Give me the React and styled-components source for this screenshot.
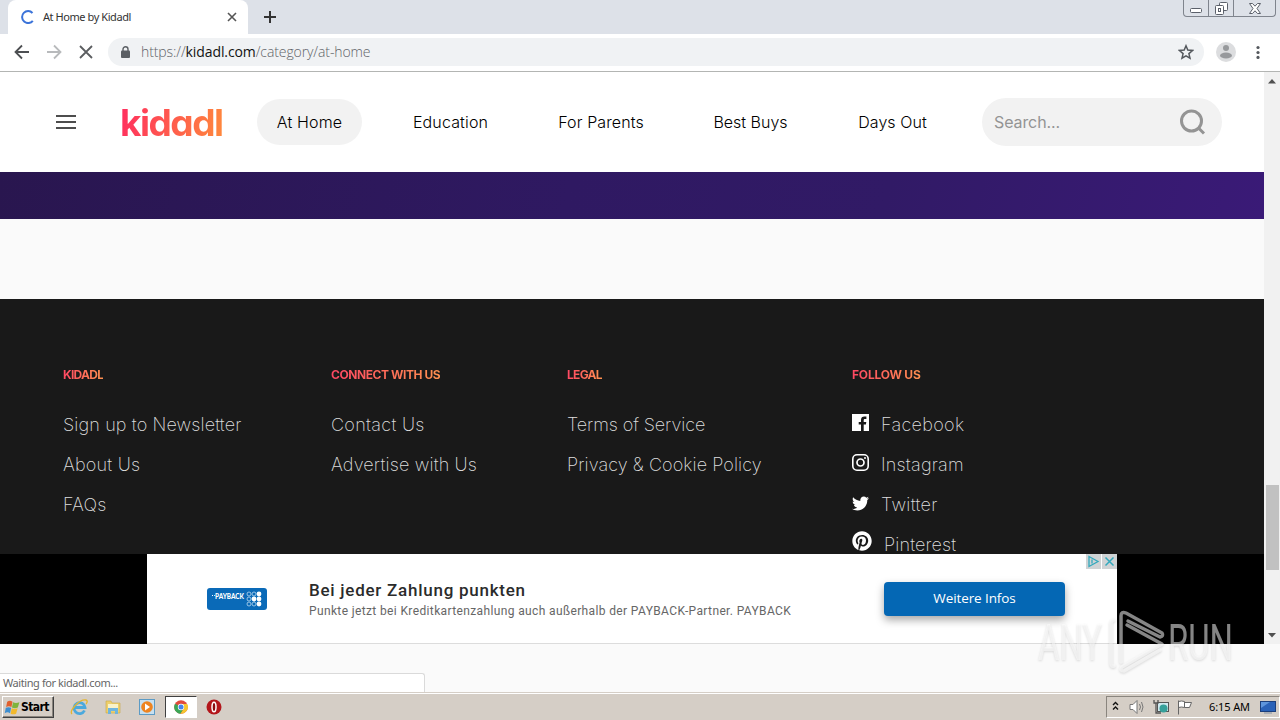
import React from "react";
import styled, { createGlobalStyle, css } from "styled-components";
import { FaTwitter, FaPinterest } from "react-icons/fa";

const GlobalStyle = createGlobalStyle`
  * {
    box-sizing: border-box;
  }
  body {
    margin: 0;
    overflow: hidden;
    font-family: "Inter", "Liberation Sans", sans-serif;
  }
  svg {
    display: block;
    flex: none;
  }
`;

const Screen = styled.div`
  position: relative;
  display: flex;
  flex-direction: column;
  width: 1280px;
  height: 720px;
  overflow: hidden;
  background: #fafafa;
`;

// text with adjustable tracking
const Label = styled.span`
  white-space: pre;
  letter-spacing: ${({ $track = 0 }) => $track}px;
`;

/* ---------- browser ---------- */

const TabStrip = styled.div`
  display: flex;
  height: 34px;
  flex: none;
  padding-left: 8px;
  background: #dde1e8;
`;

const Tab = styled.div`
  display: flex;
  align-items: center;
  width: 240px;
  height: 34px;
  padding: 0 11px 0 13px;
  background: #fff;
  border-radius: 8px 8px 0 0;
  font: 11px "Noto Sans", sans-serif;
  color: #333;
`;

const TabTitle = styled(Label)`
  flex: 1;
  margin: -2px 0 0 8px;
`;

const NewTab = styled.div`
  display: flex;
  align-items: center;
  margin-left: 16px;
`;

const WindowButtons = styled.div`
  display: flex;
  height: 17px;
  margin-left: auto;
  margin-right: 4px;
  border: 1px solid #7f848d;
  border-top: 0;
  border-radius: 0 0 4px 4px;
`;

const WindowButton = styled.div`
  display: flex;
  align-items: center;
  justify-content: center;
  width: ${({ $width }) => $width}px;
  & + & {
    border-left: 1px solid #7f848d;
  }
`;

const Toolbar = styled.div`
  display: flex;
  align-items: center;
  height: 38px;
  flex: none;
  padding: 0 14px 2px 14px;
  background: #fff;
  border-bottom: 1px solid #b3b5b3;
`;

const ToolIcons = styled.div`
  display: flex;
  gap: 16px;
`;

const AddressBar = styled.div`
  display: flex;
  align-items: center;
  width: 1096px;
  height: 28px;
  margin-left: 14px;
  padding: 0 10px 0 12px;
  background: #f0f2f4;
  border-radius: 14px;
`;

const Url = styled(Label)`
  flex: 1;
  margin-left: 10px;
  font: 300 14px "Open Sans", sans-serif;
  color: #5f6368;
  b {
    font-weight: 400;
    color: #111;
  }
`;

const Avatar = styled.div`
  margin: 0 15px 0 12px;
`;

/* ---------- page ---------- */

const Viewport = styled.div`
  display: flex;
  height: 572px;
  flex: none;
`;

const Page = styled.div`
  display: flex;
  flex-direction: column;
  width: 1264px;
  height: 572px;
  overflow: hidden;
  background: #fafafa;
`;

const Header = styled.header`
  display: flex;
  align-items: center;
  height: 100px;
  flex: none;
  padding-left: 56px;
  background: #fff;
`;

const Logo = styled.div`
  width: 180px;
  padding: 2px 0 0 43px;
  font-size: 37px;
  line-height: 44px;
  span {
    display: inline-block;
    font-weight: 700;
    font-feature-settings: "cv11";
    color: transparent;
    background: linear-gradient(100deg, #ff2d5f, #ff8a3c);
    background-clip: text;
    -webkit-background-clip: text;
  }
`;

const Nav = styled.nav`
  display: flex;
  gap: 30.5px;
`;

const NavItem = styled.a`
  display: flex;
  justify-content: center;
  align-items: center;
  width: ${({ $width }) => $width}px;
  height: 46px;
  border-radius: 23px;
  font-size: 16px;
  font-weight: 300;
  color: #000;
  ${({ $active }) =>
    $active &&
    css`
      background: #f2f2f2;
    `}
`;

const Search = styled.div`
  display: flex;
  align-items: center;
  justify-content: space-between;
  width: 240px;
  height: 48px;
  margin-left: 35px;
  padding: 0 16px 0 12px;
  border-radius: 24px;
  background: #f2f2f2;
  font-size: 16px;
  color: #949494;
`;

const Banner = styled.div`
  height: 47px;
  flex: none;
  background: linear-gradient(105deg, #29164f, #2f1962 45%, #311a66 70%, #3a1a77);
`;

const Footer = styled.footer`
  display: grid;
  grid-template-columns: 268px 236px 285px 1fr;
  height: 255px;
  flex: none;
  margin-top: 80px;
  padding: 67px 0 0 63px;
  overflow: hidden;
  background: #191919;
`;

const FooterHeading = styled.h4`
  width: max-content;
  height: 18px;
  margin: 0 0 20px;
  font-size: 12px;
  line-height: 18px;
  font-weight: 700;
  color: transparent;
  background: linear-gradient(90deg, #ff4763, #ff9150);
  background-clip: text;
  -webkit-background-clip: text;
`;

const FooterLink = styled.a`
  display: flex;
  align-items: center;
  height: 40px;
  font-size: 18px;
  font-weight: 200;
  color: #dedede;
`;

const SocialIcon = styled.span`
  margin: 0 12px ${({ $lift = 4 }) => $lift}px 0;
  color: #fff;
`;

const AdRow = styled.div`
  display: flex;
  justify-content: center;
  height: 90px;
  flex: none;
  background: #000;
`;

const Ad = styled.div`
  position: relative;
  display: flex;
  align-items: center;
  width: 970px;
  padding-left: 60px;
  background: #fff;
  border-bottom: 1px solid #dcdcdc;
`;

const AdCopy = styled.div`
  display: flex;
  flex-direction: column;
  width: 575px;
  margin-left: 42px;
  padding-top: 2px;
`;

const AdTitle = styled(Label)`
  font: 500 17px/22px "Roboto", sans-serif;
  color: #2b2b2b;
`;

const AdText = styled(Label)`
  font: 12px/20px "Roboto", sans-serif;
  color: #666;
`;

const AdButton = styled.div`
  display: flex;
  align-items: center;
  justify-content: center;
  width: 181px;
  height: 34px;
  padding-bottom: 2px;
  border-radius: 4px;
  background: #0467b4;
  box-shadow: 0 4px 9px rgba(0, 0, 0, 0.35);
  font: 13.5px "Open Sans", sans-serif;
  color: #fff;
`;

const AdChoices = styled.div`
  position: absolute;
  top: 0;
  right: 0;
  display: flex;
  gap: 1px;
`;

const Scrollbar = styled.div`
  display: flex;
  flex-direction: column;
  align-items: center;
  width: 16px;
  padding: 7px 0 6px;
  background: #f1f1f1;
`;

const Thumb = styled.div`
  width: 13px;
  height: 85px;
  margin-top: 401px;
  margin-bottom: auto;
  background: #c1c1c1;
`;

const StatusArea = styled.div`
  display: flex;
  align-items: flex-end;
  height: 48px;
  flex: none;
`;

const Status = styled.div`
  width: 425px;
  height: 19px;
  padding-left: 3px;
  border: 1px solid #dadada;
  border-left: 0;
  border-bottom: 0;
  border-radius: 0 3px 0 0;
  background: #fff;
  font: 11px/18px "Noto Sans", sans-serif;
  color: #666;
`;

/* ---------- taskbar ---------- */

const Taskbar = styled.div`
  display: flex;
  align-items: center;
  height: 28px;
  flex: none;
  padding: 1px 0 0 2px;
  border-top: 1px solid #d5cec6;
  box-shadow: inset 0 1px #fff;
  background: #d5cec6;
`;

const StartButton = styled.div`
  display: flex;
  align-items: center;
  width: 52px;
  height: 22px;
  padding-left: 1px;
  border: 1px solid;
  border-color: #fff #404040 #404040 #fff;
  box-shadow: inset -1px -1px #8a857e;
  font: bold 12px "DejaVu Sans Condensed", "DejaVu Sans", sans-serif;
  color: #000;
`;

const TaskIcon = styled.div`
  display: flex;
  align-items: center;
  justify-content: center;
  width: 32px;
  height: 22px;
  margin-left: ${({ $gap = 2 }) => $gap}px;
  ${({ $active }) =>
    $active &&
    css`
      background: #fff;
      border: 1px solid;
      border-color: #404040 #fff #fff #404040;
    `}
`;

const Tray = styled.div`
  display: flex;
  align-items: center;
  width: 174px;
  height: 22px;
  margin-left: auto;
  padding-left: 5px;
  border: 1px solid;
  border-color: #8a857e #fff #fff #8a857e;
  font: 11px "Noto Sans", sans-serif;
  color: #000;
`;

const TrayIcons = styled.div`
  display: flex;
  align-items: center;
  gap: 7px;
  svg:first-child {
    margin: -2px 3px 0 0;
  }
`;

const Clock = styled(Label)`
  width: 41px;
  margin: -1px 10px 0 16px;
`;

const Watermark = styled.svg`
  position: absolute;
  left: 1030px;
  top: 604px;
  filter: drop-shadow(0 1px 1px rgba(0, 0, 0, 0.25));
`;

const NAV = [
  { text: "At Home", width: 105, track: 0.15, active: true },
  { text: "Education", width: 116, track: 0.15 },
  { text: "For Parents", width: 124, track: 0.12 },
  { text: "Best Buys", width: 114, track: 0 },
  { text: "Days Out", width: 109, track: 0.05 },
];

const FOOTER = [
  {
    title: "KIDADL",
    track: -0.7,
    links: [
      { text: "Sign up to Newsletter", track: 0.13 },
      { text: "About Us", track: 0.2 },
      { text: "FAQs", track: 0.1 },
    ],
  },
  {
    title: "CONNECT WITH US",
    track: -0.43,
    links: [
      { text: "Contact Us", track: 0.3 },
      { text: "Advertise with Us", track: 0.16 },
    ],
  },
  {
    title: "LEGAL",
    track: -0.7,
    links: [
      { text: "Terms of Service", track: -0.1 },
      { text: "Privacy & Cookie Policy", track: 0.08 },
    ],
  },
];

const FacebookIcon = () => (
  <svg width="17" height="17" viewBox="0 0 17 17">
    <path
      fill="#fff"
      fillRule="evenodd"
      d="M0 0h17v17h-5.3v-6.5h2.2l.4-2.6h-2.6V6.3c0-.8.4-1.3 1.4-1.3h1.3V2.6l-2-.1c-2.1 0-3.4 1.2-3.4 3.4v2H6.7v2.6H9V17H0z"
    />
  </svg>
);

const InstagramIcon = () => (
  <svg width="17" height="17" viewBox="0 0 17 17" fill="none" stroke="#fff">
    <rect x=".8" y=".8" width="15.4" height="15.4" rx="4.2" strokeWidth="1.6" />
    <circle cx="8.5" cy="8.5" r="3.5" strokeWidth="1.7" />
    <circle cx="13" cy="4" r="1" fill="#fff" stroke="none" />
  </svg>
);

const SOCIAL = [
  { text: "Facebook", track: 0.3, icon: <FacebookIcon /> },
  { text: "Instagram", track: 0.2, icon: <InstagramIcon /> },
  { text: "Twitter", track: 0.3, lift: 1, icon: <FaTwitter size={17} /> },
  { text: "Pinterest", track: 0.15, lift: 6, icon: <FaPinterest size={20} /> },
];

const Browser = () => (
  <>
    <TabStrip>
      <Tab>
        <svg width="14" height="14" viewBox="0 0 14 14" fill="none">
          <path d="M11.5 3A6 6 0 1 0 11.8 10.8" stroke="#3b73d9" strokeWidth="2" />
        </svg>
        <TabTitle $track={-0.43}>At Home by Kidadl</TabTitle>
        <svg width="10" height="10" viewBox="0 0 10 10" stroke="#555" strokeWidth="1.6">
          <path d="M1 1l8 8M9 1L1 9" />
        </svg>
      </Tab>
      <NewTab>
        <svg width="12" height="12" viewBox="0 0 12 12" stroke="#333" strokeWidth="2">
          <path d="M6 0v12M0 6h12" />
        </svg>
      </NewTab>
      <WindowButtons>
        <WindowButton $width={24}>
          <svg width="12" height="14" viewBox="0 0 12 14">
            <rect x=".5" y="7.5" width="11" height="4" rx="1" fill="#fff" stroke="#5b606a" />
          </svg>
        </WindowButton>
        <WindowButton $width={25}>
          <svg width="13" height="13" viewBox="0 0 13 13" fill="#fff" stroke="#5b606a">
            <rect x="4.5" y=".5" width="8" height="8" rx="1" />
            <rect x=".5" y="3.5" width="8" height="9" rx="1" />
            <rect x="3.5" y="6.5" width="2" height="3" />
          </svg>
        </WindowButton>
        <WindowButton $width={42}>
          <svg width="12" height="11" viewBox="0 0 12 11" fill="#fff" stroke="#5b606a">
            <path d="M.5.5h3L6 3.2 8.5.5h3L8 5.5l3.5 5h-3L6 7.8l-2.5 2.7h-3L4 5.5z" />
          </svg>
        </WindowButton>
      </WindowButtons>
    </TabStrip>
    <Toolbar>
      <ToolIcons>
        <svg width="16" height="16" viewBox="0 0 16 16" fill="none" stroke="#4d4f52" strokeWidth="1.8">
          <path d="M15 8H2M8 1.5L1.5 8 8 14.5" />
        </svg>
        <svg width="16" height="16" viewBox="0 0 16 16" fill="none" stroke="#b8babc" strokeWidth="1.8">
          <path d="M1 8h13M8 1.5L14.5 8 8 14.5" />
        </svg>
        <svg width="16" height="16" viewBox="0 0 16 16" fill="none" stroke="#5b5d60" strokeWidth="1.8">
          <path d="M2 2l12 12M14 2L2 14" />
        </svg>
      </ToolIcons>
      <AddressBar>
        <svg width="11" height="12" viewBox="0 0 11 12">
          <path d="M3 5V3.3a2.5 2.5 0 0 1 5 0V5" fill="none" stroke="#5b5f64" strokeWidth="1.4" />
          <rect x="1" y="4.5" width="9" height="7.5" rx="1" fill="#5b5f64" />
        </svg>
        <Url $track={-0.1}>
          https://<b>kidadl.com</b>/category/at-home
        </Url>
        <svg width="16" height="16" viewBox="0 0 16 16" fill="none" stroke="#54585d" strokeWidth="1.5">
          <path d="M8 1.8l1.8 4.3 4.7.4-3.6 3.1 1.1 4.6L8 11.8l-4 2.4 1.1-4.6L1.5 6.5l4.7-.4z" />
        </svg>
      </AddressBar>
      <Avatar>
        <svg width="20" height="20" viewBox="0 0 20 20">
          <circle cx="10" cy="10" r="10" fill="#dcdddf" />
          <circle cx="10" cy="6" r="3" fill="#97999c" />
          <ellipse cx="10" cy="13.5" rx="6" ry="3" fill="#97999c" />
        </svg>
      </Avatar>
      <svg width="14" height="14" viewBox="0 0 14 14" fill="#54585d">
        <circle cx="7" cy="2.5" r="1.6" />
        <circle cx="7" cy="7.5" r="1.6" />
        <circle cx="7" cy="12.4" r="1.6" />
      </svg>
    </Toolbar>
  </>
);

const SiteHeader = () => (
  <Header>
    <svg width="21" height="16" viewBox="0 0 21 16" fill="#4d4d4d">
      <path d="M0 1h20v2H0zM0 7h20v2H0zM0 13h20v2H0z" />
    </svg>
    <Logo>
      <Label $track={-1.5}>kidadl</Label>
    </Logo>
    <Nav>
      {NAV.map(({ text, width, track, active }) => (
        <NavItem key={text} $width={width} $active={active}>
          <Label $track={track}>{text}</Label>
        </NavItem>
      ))}
    </Nav>
    <Search>
      <Label $track={-0.1}>Search...</Label>
      <svg width="28" height="28" viewBox="0 0 28 28" fill="none" stroke="#949494" strokeWidth="3">
        <circle cx="13.5" cy="13" r="10" />
        <path d="M20 19.5l6 6" />
      </svg>
    </Search>
  </Header>
);

const SiteFooter = () => (
  <Footer>
    {FOOTER.map(({ title, track, links }) => (
      <div key={title}>
        <FooterHeading>
          <Label $track={track}>{title}</Label>
        </FooterHeading>
        {links.map((link) => (
          <FooterLink key={link.text}>
            <Label $track={link.track}>{link.text}</Label>
          </FooterLink>
        ))}
      </div>
    ))}
    <div>
      <FooterHeading>
        <Label $track={-0.2}>FOLLOW US</Label>
      </FooterHeading>
      {SOCIAL.map(({ text, track, lift, icon }) => (
        <FooterLink key={text}>
          <SocialIcon $lift={lift}>{icon}</SocialIcon>
          <Label $track={track}>{text}</Label>
        </FooterLink>
      ))}
    </div>
  </Footer>
);

const PaybackLogo = () => (
  <svg width="60" height="22" viewBox="0 0 60 22">
    <rect width="60" height="22" rx="3" fill="#0a6ab8" />
    <text
      x="8"
      y="11"
      textLength="29"
      lengthAdjust="spacingAndGlyphs"
      fontFamily="Lato, sans-serif"
      fontWeight="900"
      fontSize="6.5"
      fill="#fff"
    >
      PAYBACK
    </text>
    <path d="M5 7.5h1M7 7.5h.8" stroke="#fff" />
    <g fill="none" stroke="#b9d8f0" strokeWidth=".8">
      <circle cx="42" cy="6" r="2" />
      <circle cx="47" cy="6" r="2" />
      <circle cx="42" cy="11" r="2" />
      <circle cx="42" cy="16" r="2" />
      <circle cx="47" cy="16" r="2" />
    </g>
    <g fill="#fff">
      <circle cx="52" cy="6" r="2.4" />
      <circle cx="47" cy="11" r="2.4" />
      <circle cx="52" cy="11" r="2.4" />
      <circle cx="52" cy="16" r="2.4" />
    </g>
  </svg>
);

const AdBanner = () => (
  <AdRow>
    <Ad>
      <PaybackLogo />
      <AdCopy>
        <AdTitle $track={0.74}>Bei jeder Zahlung punkten</AdTitle>
        <AdText $track={0.37}>
          Punkte jetzt bei Kreditkartenzahlung auch außerhalb der PAYBACK-Partner. PAYBACK
        </AdText>
      </AdCopy>
      <AdButton>
        <Label $track={-0.1}>Weitere Infos</Label>
      </AdButton>
      <AdChoices>
        <svg width="15" height="15" viewBox="0 0 15 15" fill="none" stroke="#32a9bd" strokeWidth="1.3">
          <path d="M0 0h15v15H0z" fill="#cfd3d5" stroke="none" />
          <path d="M3 2.5v10l9-5zM6 5.5v4" />
        </svg>
        <svg width="15" height="15" viewBox="0 0 15 15" stroke="#32a9bd" strokeWidth="1.5">
          <path d="M0 0h15v15H0z" fill="#cfd3d5" stroke="none" />
          <path d="M3.5 3.5l8 8M11.5 3.5l-8 8" />
        </svg>
      </AdChoices>
    </Ad>
  </AdRow>
);

const WindowsTaskbar = () => (
  <Taskbar>
    <StartButton>
      <svg width="17" height="17" viewBox="0 0 16 16">
        <path d="M3 2.5q2.500-1.500 5 0L7 7.500q-2.500-1.300-5 0z" fill="#e0602e" />
        <path d="M8.500 3q2.500 1.300 6 0l-1.500 5q-3 1.300-5.500 0z" fill="#7fb43c" />
        <path d="M1.700 8.300q2.500-1.300 5 0l-1 5q-2.500-1.500-5 0z" fill="#3d8ed0" />
        <path d="M7.300 8.800q2.500 1.300 5.500 0l-1.400 5q-2.800 1.200-5.200 0z" fill="#f2b92c" />
      </svg>
      <Label $track={-0.6}>Start</Label>
    </StartButton>
    <TaskIcon $gap={9}>
      <svg width="18" height="18" viewBox="0 0 18 18" fill="none">
        <path d="M14.5 12.5a5.5 5.5 0 1 1 .5-3H5" stroke="#4ba9dd" strokeWidth="2.8" />
        <path d="M2 16C-1 13 9 1 16 2c2 .5 1 3 0 4" stroke="#e5b52e" strokeWidth="1.3" />
      </svg>
    </TaskIcon>
    <TaskIcon>
      <svg width="16" height="16" viewBox="0 0 16 16">
        <path d="M1 2h5l1 2h8v10H1z" fill="#edcf6d" stroke="#c9a945" strokeWidth=".6" />
        <path d="M3 5h10v4H3z" fill="#f9f2c9" />
        <path d="M3 15V9h10v6h-3v-3H6v3z" fill="#6fb5de" />
      </svg>
    </TaskIcon>
    <TaskIcon>
      <svg width="16" height="16" viewBox="0 0 16 16">
        <rect x=".5" y=".5" width="15" height="15" fill="#c7e0f0" stroke="#5c9bc5" />
        <circle cx="8" cy="8" r="5.8" fill="#ee8420" />
        <path d="M6 4.5v7l5-3.500z" fill="#fff" />
      </svg>
    </TaskIcon>
    <TaskIcon $active>
      <svg width="14" height="14" viewBox="0 0 14 14">
        <circle cx="7" cy="7" r="6.8" fill="#e14a3c" />
        <path d="M7 7L1 3.8A6.8 6.8 0 0 0 6.5 13.8L9.8 8.5z" fill="#3aa757" />
        <path d="M7 4h6.2A6.8 6.8 0 0 1 6.5 13.8L9.8 8.5z" fill="#f6c62f" />
        <circle cx="7" cy="7" r="3.2" fill="#fff" />
        <circle cx="7" cy="7" r="2.5" fill="#4583ec" />
      </svg>
    </TaskIcon>
    <TaskIcon $gap={1}>
      <svg width="16" height="16" viewBox="0 0 16 16">
        <circle cx="8" cy="8" r="7.5" fill="#b3161b" />
        <ellipse cx="8" cy="8" rx="2" ry="4.8" fill="#8c0c10" stroke="#fff" strokeWidth="1.5" />
      </svg>
    </TaskIcon>
    <Tray>
      <TrayIcons>
        <svg width="7" height="10" viewBox="0 0 7 10" fill="none" stroke="#111" strokeWidth="1.4">
          <path d="M1 4l2.5-2.5L6 4M1 8.5L3.5 6 6 8.5" />
        </svg>
        <svg width="17" height="16" viewBox="0 0 17 16" fill="none" stroke="#777">
          <path d="M1 5.5h3l4-4v13l-4-4H1z" fill="#fff" />
          <path d="M10.5 5q2 3 0 6M12.5 3q3 5 0 10" />
        </svg>
        <svg width="16" height="16" viewBox="0 0 16 16">
          <rect x="4.5" y="3.5" width="11" height="9" fill="#cfe9ef" stroke="#555" />
          <circle cx="10.5" cy="9.5" r="4" fill="#36a09a" />
          <path d="M1 1v3h4V1M3 4v10h5" fill="none" stroke="#555" strokeWidth="1.3" />
        </svg>
        <svg width="17" height="16" viewBox="0 0 17 16" fill="#fff" stroke="#666">
          <path d="M2.5 1.5v14M2.5 2.5q3-1 6 0v6q-3-1-6 0M8.5 3.5h7l-2 5h-5" />
        </svg>
      </TrayIcons>
      <Clock $track={-0.1}>6:15 AM</Clock>
      <svg width="16" height="14" viewBox="0 0 16 14">
        <rect x=".5" y="1.5" width="15" height="10" fill="#2a62b8" stroke="#1c3f7c" />
        <path d="M1 2h9L1 8z" fill="#5e95dc" />
        <path d="M4 13h8" stroke="#8390a3" />
      </svg>
    </Tray>
  </Taskbar>
);

const AnyRun = () => (
  <Watermark width="220" height="80" viewBox="0 0 220 80">
    <g fill="#fff" fillOpacity=".52" fontFamily="Roboto, sans-serif" fontSize="50" fontWeight="400">
      <text x="8" y="56" textLength="64" lengthAdjust="spacingAndGlyphs">
        ANY
      </text>
      <text x="138" y="56" textLength="65" lengthAdjust="spacingAndGlyphs">
        RUN
      </text>
    </g>
    <g
      fill="none"
      stroke="#fff"
      strokeOpacity=".52"
      strokeWidth="3.5"
      strokeLinejoin="round"
      strokeLinecap="round"
    >
      <path d="M84 16q-2 0-3 3v40q0 4 3 3M91 58V12q0-5 5-3l36 20q2 3-2 4L98 17M97 21l35 19-40 23q-3 4 2 4l36-21" />
    </g>
  </Watermark>
);

const App = () => {
  return (
    <>
      <GlobalStyle />
      <Screen>
        <Browser />
        <Viewport>
          <Page>
            <SiteHeader />
            <Banner />
            <SiteFooter />
            <AdBanner />
          </Page>
          <Scrollbar>
            <svg width="8" height="5" viewBox="0 0 8 5" fill="#505050">
              <path d="M4 0l4 4.5H0z" />
            </svg>
            <Thumb />
            <svg width="8" height="5" viewBox="0 0 8 5" fill="#505050">
              <path d="M0 0h8L4 4.5z" />
            </svg>
          </Scrollbar>
        </Viewport>
        <StatusArea>
          <Status>
            <Label $track={-0.42}>Waiting for kidadl.com...</Label>
          </Status>
        </StatusArea>
        <WindowsTaskbar />
        <AnyRun />
      </Screen>
    </>
  );
};

export default App;
